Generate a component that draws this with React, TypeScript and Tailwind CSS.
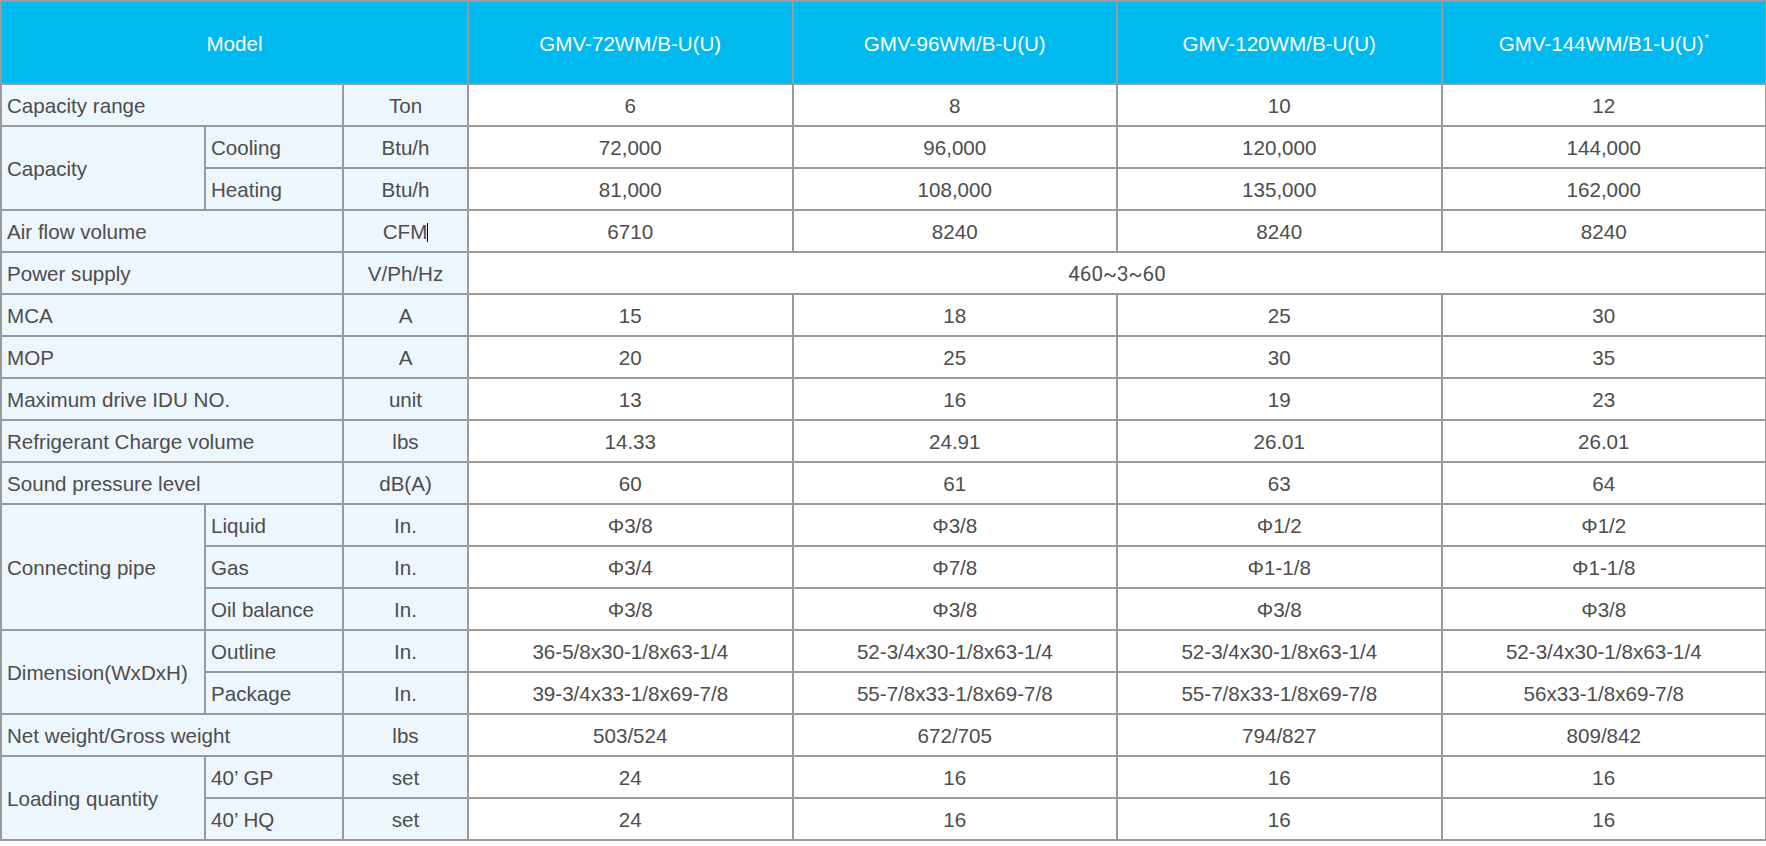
import React from "react";

type Row = {
  group?: { label: string; span: number };
  sub?: string;
  full?: string;
  unit: React.ReactNode;
  values: string[];
  merged?: boolean;
};

const rows: Row[] = [
  { full: "Capacity range", unit: "Ton", values: ["6", "8", "10", "12"] },
  { group: { label: "Capacity", span: 2 }, sub: "Cooling", unit: "Btu/h", values: ["72,000", "96,000", "120,000", "144,000"] },
  { sub: "Heating", unit: "Btu/h", values: ["81,000", "108,000", "135,000", "162,000"] },
  {
    full: "Air flow volume",
    unit: (
      <span>
        CFM<span className="inline-block w-px h-[19px] bg-black align-[-3px]" />
      </span>
    ),
    values: ["6710", "8240", "8240", "8240"],
  },
  { full: "Power supply", unit: "V/Ph/Hz", values: ["460~3~60"], merged: true },
  { full: "MCA", unit: "A", values: ["15", "18", "25", "30"] },
  { full: "MOP", unit: "A", values: ["20", "25", "30", "35"] },
  { full: "Maximum drive IDU NO.", unit: "unit", values: ["13", "16", "19", "23"] },
  { full: "Refrigerant Charge volume", unit: "lbs", values: ["14.33", "24.91", "26.01", "26.01"] },
  { full: "Sound pressure level", unit: "dB(A)", values: ["60", "61", "63", "64"] },
  { group: { label: "Connecting pipe", span: 3 }, sub: "Liquid", unit: "In.", values: ["Φ3/8", "Φ3/8", "Φ1/2", "Φ1/2"] },
  { sub: "Gas", unit: "In.", values: ["Φ3/4", "Φ7/8", "Φ1-1/8", "Φ1-1/8"] },
  { sub: "Oil balance", unit: "In.", values: ["Φ3/8", "Φ3/8", "Φ3/8", "Φ3/8"] },
  {
    group: { label: "Dimension(WxDxH)", span: 2 },
    sub: "Outline",
    unit: "In.",
    values: ["36-5/8x30-1/8x63-1/4", "52-3/4x30-1/8x63-1/4", "52-3/4x30-1/8x63-1/4", "52-3/4x30-1/8x63-1/4"],
  },
  {
    sub: "Package",
    unit: "In.",
    values: ["39-3/4x33-1/8x69-7/8", "55-7/8x33-1/8x69-7/8", "55-7/8x33-1/8x69-7/8", "56x33-1/8x69-7/8"],
  },
  { full: "Net weight/Gross weight", unit: "lbs", values: ["503/524", "672/705", "794/827", "809/842"] },
  { group: { label: "Loading quantity", span: 2 }, sub: "40’ GP", unit: "set", values: ["24", "16", "16", "16"] },
  { sub: "40’ HQ", unit: "set", values: ["24", "16", "16", "16"] },
];

const cell = "border-2 border-[#9a9a9a] px-0 pb-0 pt-[3px]";
const label = `${cell} bg-[#eef6fd] text-left pl-[5px]`;
const unitCls = `${cell} bg-[#eef6fd] text-center`;
const dataCls = `${cell} bg-white text-center`;

export default function App() {
  return (
    <div className="bg-white w-[1766px] h-[846px] font-['Liberation_Sans',Arial,sans-serif] text-[20.6px] text-[#4d4d4d] leading-none">
      <table className="border-collapse table-fixed w-[1765px]">
        <colgroup>
          <col className="w-[204px]" />
          <col className="w-[138px]" />
          <col className="w-[125px]" />
          <col className="w-[324.5px]" />
          <col className="w-[324.5px]" />
          <col className="w-[324.5px]" />
          <col className="w-[324.5px]" />
        </colgroup>
        <thead>
          <tr className="h-[83px]">
            <th colSpan={3} className={`${cell} bg-[#00b9ef] text-white font-normal text-center`}>
              Model
            </th>
            {["GMV-72WM/B-U(U)", "GMV-96WM/B-U(U)", "GMV-120WM/B-U(U)"].map((m) => (
              <th key={m} className={`${cell} bg-[#00b9ef] text-white font-normal text-center`}>
                {m}
              </th>
            ))}
            <th className={`${cell} bg-[#00b9ef] text-white font-normal text-center`}>
              GMV-144WM/B1-U(U)
              <sup className="text-[11px] relative -top-[9px] ml-[1px]">*</sup>
            </th>
          </tr>
        </thead>
        <tbody>
          {rows.map((r, i) => (
            <tr key={i} className="h-[42px]">
              {r.full !== undefined ? (
                <td colSpan={2} className={label}>
                  {r.full}
                </td>
              ) : (
                <>
                  {r.group && (
                    <td rowSpan={r.group.span} className={label}>
                      {r.group.label}
                    </td>
                  )}
                  <td className={label}>{r.sub}</td>
                </>
              )}
              <td className={unitCls}>{r.unit}</td>
              {r.merged ? (
                <td colSpan={4} className={`${dataCls} font-['Liberation_Sans_Narrow',Roboto,sans-serif]`}>
                  {r.values[0]}
                </td>
              ) : (
                r.values.map((v, j) => (
                  <td key={j} className={dataCls}>
                    {v}
                  </td>
                ))
              )}
            </tr>
          ))}
        </tbody>
      </table>
    </div>
  );
}
